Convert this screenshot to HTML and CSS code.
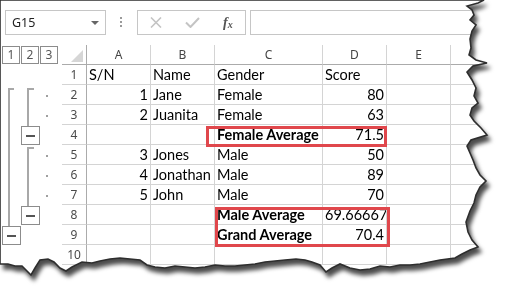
FILE: index.html
```html
<!DOCTYPE html>
<html>
<head>
    <title>Subtotals</title>
    <link rel="stylesheet" href="styles.css">
</head>
<body>
    <div class="shot">
        <div class="screen">
            <div class="formula-bar">
                <div class="name-box"><span>G15</span><span class="caret"></span></div>
                <div class="grip">
                    <svg width="3" height="11" viewBox="0 0 3 11"><rect x="0" y="0" width="2" height="2" fill="#9a9a9a"/><rect x="0" y="4" width="2" height="2" fill="#9a9a9a"/><rect x="0" y="8" width="2" height="2" fill="#9a9a9a"/></svg>
                </div>
                <div class="fx-box">
                    <svg width="12" height="11" viewBox="0 0 12 11"><path d="M1 0.5 L11 10.5 M11 0.5 L1 10.5" stroke="#c4c4c4" stroke-width="1.6" fill="none"/></svg>
                    <svg width="15" height="11" viewBox="0 0 15 11"><path d="M1 5.5 L5.5 10 L14 1" stroke="#c4c4c4" stroke-width="2" fill="none"/></svg>
                    <span class="fx">f<sub>x</sub></span>
                </div>
                <div class="formula-input"></div>
            </div>

            <div class="sheet">
                <div class="gutter">
                    <div class="levels"><span>1</span><span>2</span><span>3</span></div>
                    <svg width="62" height="200" viewBox="0 0 62 200">
                        <g stroke="#a8a8a8" stroke-width="2" fill="none">
                            <path d="M14 24 H9 V161"/>
                            <path d="M34 24 H28 V61"/>
                            <path d="M34 83 H28 V141"/>
                        </g>
                        <g fill="#a0a0a0">
                            <rect x="46" y="30" width="2" height="2"/>
                            <rect x="46" y="50" width="2" height="2"/>
                            <rect x="46" y="90" width="2" height="2"/>
                            <rect x="46" y="110" width="2" height="2"/>
                            <rect x="46" y="130" width="2" height="2"/>
                        </g>
                        <g fill="#fff" stroke="#8c8c8c">
                            <rect x="21.5" y="61.5" width="18" height="18"/>
                            <rect x="21.5" y="141.5" width="18" height="18"/>
                            <rect x="2.5" y="161.5" width="18" height="18"/>
                        </g>
                        <g fill="#555">
                            <rect x="26" y="70" width="9" height="2"/>
                            <rect x="26" y="150" width="9" height="2"/>
                            <rect x="7" y="170" width="9" height="2"/>
                        </g>
                    </svg>
                </div>

                <div class="grid">
                    <div class="row head">
                        <div class="corner"><svg width="12" height="12" viewBox="0 0 12 12"><path d="M12 0 V12 H0 Z" fill="#d6d6d6"/></svg></div>
                        <div>A</div><div>B</div><div>C</div><div>D</div><div>E</div><div></div>
                    </div>
                    <div class="row">
                        <div class="rn">1</div><div>S/N</div><div>Name</div><div>Gender</div><div>Score</div><div></div><div></div>
                    </div>
                    <div class="row">
                        <div class="rn">2</div><div class="num">1</div><div>Jane</div><div>Female</div><div class="num">80</div><div></div><div></div>
                    </div>
                    <div class="row">
                        <div class="rn">3</div><div class="num">2</div><div>Juanita</div><div>Female</div><div class="num">63</div><div></div><div></div>
                    </div>
                    <div class="row">
                        <div class="rn">4</div><div></div><div></div><div class="b">Female Average</div><div class="num">71.5</div><div></div><div></div>
                    </div>
                    <div class="row">
                        <div class="rn">5</div><div class="num">3</div><div>Jones</div><div>Male</div><div class="num">50</div><div></div><div></div>
                    </div>
                    <div class="row">
                        <div class="rn">6</div><div class="num">4</div><div>Jonathan</div><div>Male</div><div class="num">89</div><div></div><div></div>
                    </div>
                    <div class="row">
                        <div class="rn">7</div><div class="num">5</div><div>John</div><div>Male</div><div class="num">70</div><div></div><div></div>
                    </div>
                    <div class="row">
                        <div class="rn">8</div><div></div><div></div><div class="b">Male Average</div><div class="num">69.66667</div><div></div><div></div>
                    </div>
                    <div class="row">
                        <div class="rn">9</div><div></div><div></div><div class="b">Grand Average</div><div class="num">70.4</div><div></div><div></div>
                    </div>
                    <div class="row">
                        <div class="rn">10</div><div></div><div></div><div></div><div></div><div></div><div></div>
                    </div>

                    <div class="mark mark-female"></div>
                    <div class="mark mark-totals"></div>
                </div>
            </div>
        </div>

        <svg class="edge" width="510" height="301" viewBox="0 0 510 301">
            <polygon fill="none" stroke="#2e2e2e" stroke-width="1.6" points="0,0 484,0 478,3 467,6 472,10 474,15 470,20 476,25 472,31 470,39 471,48 469,55 476,60 487,63 473,66 467,72 472,80 476,88 474,96 478,103 472,108 470,115 474,121 481,128 487,135 471,140 467,146 470,153 473,160 476,168 480,175 486,181 480,187 476,195 474,203 470,211 466,222 468,232 472,240 478,247 470,250 462,254 455,258 440,260 430,262 420,264 410,265 400,265 390,267 380,266 370,269 360,270 350,268 340,264 332,268 326,272 320,265 312,262 305,260 296,259 285,260 275,261 265,262 255,264 245,265 235,266 225,266 215,265 205,267 195,268 185,267 175,266 165,268 155,267 147,265 140,260 130,259 120,258 110,259 100,261 92,263 82,262 72,267 66,271 60,268 54,262 48,259 40,260 35,268 31,275 27,271 22,266 15,266 8,264 0,264"/>
        </svg>
    </div>
</body>
</html>
```

FILE: styles.css
```css
body {
    margin: 0;
    background-color: #fff;
    font-family: "Noto Sans", sans-serif;
}

.shot {
    position: relative;
    width: 510px;
    height: 301px;
    filter: drop-shadow(3px 5px 2px rgba(0, 0, 0, 0.7));
}

.screen {
    width: 510px;
    height: 301px;
    overflow: hidden;
    background-color: #fff;
    clip-path: polygon(0 0, 484px 0, 478px 3px, 467px 6px, 472px 10px, 474px 15px, 470px 20px, 476px 25px, 472px 31px, 470px 39px, 471px 48px, 469px 55px, 476px 60px, 487px 63px, 473px 66px, 467px 72px, 472px 80px, 476px 88px, 474px 96px, 478px 103px, 472px 108px, 470px 115px, 474px 121px, 481px 128px, 487px 135px, 471px 140px, 467px 146px, 470px 153px, 473px 160px, 476px 168px, 480px 175px, 486px 181px, 480px 187px, 476px 195px, 474px 203px, 470px 211px, 466px 222px, 468px 232px, 472px 240px, 478px 247px, 470px 250px, 462px 254px, 455px 258px, 440px 260px, 430px 262px, 420px 264px, 410px 265px, 400px 265px, 390px 267px, 380px 266px, 370px 269px, 360px 270px, 350px 268px, 340px 264px, 332px 268px, 326px 272px, 320px 265px, 312px 262px, 305px 260px, 296px 259px, 285px 260px, 275px 261px, 265px 262px, 255px 264px, 245px 265px, 235px 266px, 225px 266px, 215px 265px, 205px 267px, 195px 268px, 185px 267px, 175px 266px, 165px 268px, 155px 267px, 147px 265px, 140px 260px, 130px 259px, 120px 258px, 110px 259px, 100px 261px, 92px 263px, 82px 262px, 72px 267px, 66px 271px, 60px 268px, 54px 262px, 48px 259px, 40px 260px, 35px 268px, 31px 275px, 27px 271px, 22px 266px, 15px 266px, 8px 264px, 0 264px);
}

.edge {
    position: absolute;
    left: 0;
    top: 0;
}

/* formula bar */
.formula-bar {
    display: flex;
    align-items: center;
    height: 45px;
    padding-left: 5px;
    box-sizing: border-box;
}

.name-box {
    width: 101px;
    height: 25px;
    border: 1px solid #c6c6c6;
    box-sizing: border-box;
    display: flex;
    align-items: center;
    justify-content: space-between;
    padding: 0 6px 0 6px;
    font-size: 12.5px;
    color: #222;
}

.caret {
    border-left: 4px solid transparent;
    border-right: 4px solid transparent;
    border-top: 4px solid #666;
}

.grip {
    width: 31px;
    display: flex;
    justify-content: center;
}

.fx-box {
    width: 109px;
    height: 25px;
    border: 1px solid #c6c6c6;
    box-sizing: border-box;
    display: flex;
    align-items: center;
    gap: 23px;
    padding-left: 12px;
}

.fx {
    font-family: "Liberation Serif", serif;
    font-style: italic;
    font-weight: bold;
    font-size: 14px;
    color: #555;
    line-height: 1;
}

.fx sub {
    font-size: 10px;
    vertical-align: -1px;
}

.formula-input {
    width: 250px;
    height: 25px;
    margin-left: 4px;
    border: 1px solid #c6c6c6;
    box-sizing: border-box;
}

/* sheet */
.sheet {
    display: flex;
}

.gutter {
    width: 62px;
    flex: none;
}

.gutter svg {
    display: block;
}

.levels {
    display: flex;
    gap: 1px;
    height: 20px;
    padding: 1px 0 0 2px;
    box-sizing: border-box;
}

.levels span {
    width: 18px;
    height: 18px;
    border: 1px solid #8c8c8c;
    box-sizing: border-box;
    text-align: center;
    font-size: 12px;
    line-height: 16px;
    color: #555;
}

.grid {
    flex: 1;
    position: relative;
}

.row {
    display: grid;
    grid-template-columns: 25px 64px 64px 108px 64px 64px 1fr;
    height: 20px;
}

.row > div {
    box-sizing: border-box;
    border-right: 1px solid #d4d4d4;
    border-bottom: 1px solid #d4d4d4;
    padding: 0 2px;
    overflow: hidden;
    white-space: nowrap;
    font-family: Lato, sans-serif;
    font-size: 14.5px;
    line-height: 20px;
    color: #000;
}

.head > div {
    font-family: "Noto Sans", sans-serif;
    font-size: 12px;
    line-height: 19px;
    color: #444;
    text-align: center;
    border-bottom-color: #ababab;
}

.head > .corner {
    display: flex;
    align-items: flex-end;
    justify-content: flex-end;
    padding: 0 3px 2px 0;
    border-right-color: #ababab;
}

.row > .rn {
    font-family: "Noto Sans", sans-serif;
    font-size: 12px;
    line-height: 20px;
    color: #4a4a4a;
    text-align: center;
    border-right-color: #ababab;
}

.row > .num {
    text-align: right;
}

.row > .b {
    font-weight: bold;
}

.mark {
    position: absolute;
    border: 3px solid #e0474c;
    box-sizing: border-box;
}

.mark-female {
    left: 144px;
    top: 81px;
    width: 181px;
    height: 21px;
}

.mark-totals {
    left: 153px;
    top: 162px;
    width: 175px;
    height: 40px;
}
```
